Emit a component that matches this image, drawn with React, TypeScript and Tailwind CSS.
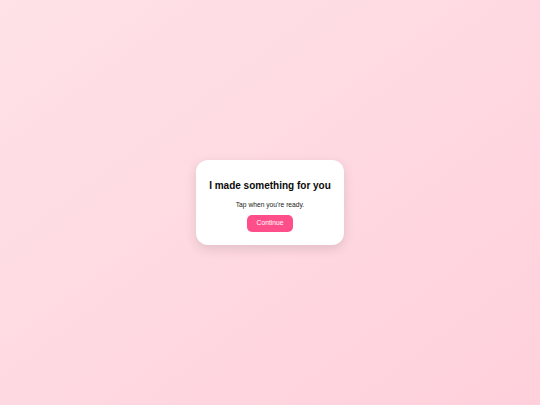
export default function App() {
  return (
    <div
      className="flex h-[405px] w-full items-center justify-center bg-gradient-to-br from-[#fee2e7] to-[#ffd0db]"
      style={{ fontFamily: '"Liberation Sans", Arial, sans-serif' }}
    >
      <div className="flex w-[148px] flex-col items-center rounded-[12px] bg-white pb-[13px] pt-[20px] shadow-[0_4px_12px_rgba(0,0,0,0.12)]">
        <h1 className="whitespace-nowrap text-[10px] font-bold leading-[12px] text-[#0a0a0a]">I made something for you</h1>
        <p className="mt-[8px] text-[6.7px] leading-[9px] text-[#222]">Tap when you're ready.</p>
        <button className="mt-[6px] h-[17px] w-[46px] rounded-[5px] bg-[#ff4f8b] text-[6.7px] text-white">
          Continue
        </button>
      </div>
    </div>
  );
}
